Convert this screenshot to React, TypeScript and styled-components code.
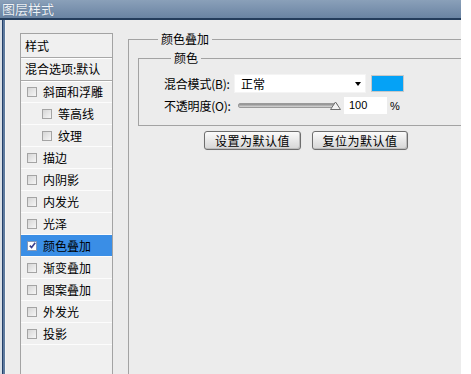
import React from 'react';
import styled, { createGlobalStyle } from 'styled-components';

const GlobalStyle = createGlobalStyle`
	html, body {
		margin: 0;
		padding: 0;
		background: #fff;
	}
	body {
		font-family: "Noto Sans CJK SC", "Liberation Sans", sans-serif;
		font-size: 12px;
		color: #000;
	}
`;

const Window = styled.div`
	width: 461px;
	height: 374px;
	display: flex;
	flex-direction: column;
	overflow: hidden;
`;

const TitleBar = styled.div`
	height: 18px;
	flex: none;
	display: flex;
	align-items: center;
	background: linear-gradient(#8aa0b9, #6a84a3);
	border-bottom: 2px solid #243d5c;
	color: #eef2f7;
	font-size: 13px;
	line-height: 18px;
	padding-left: 2px;
	text-shadow: 0 0 1px #46607f;
`;

const Body = styled.div`
	flex: 1;
	display: flex;
	min-height: 0;
`;

const FrameEdge = styled.div`
	width: 6px;
	flex: none;
	background: linear-gradient(90deg, #d9dfe6 0 2px, #24406a 2px 3px, #5f7b9e 3px 5px, #f4f4f4 5px);
`;

const Content = styled.div`
	flex: 1;
	display: flex;
	align-items: stretch;
	gap: 15px;
	padding: 13px 0 0 14px;
	background: #ececec;
	overflow: hidden;
`;

const StyleList = styled.div`
	width: 91px;
	flex: none;
	border: 1px solid #a3a3a3;
	border-bottom: none;
	background: #f0f0f0;
	display: flex;
	flex-direction: column;
`;

const ListHeader = styled.div<{ $h: number }>`
	height: ${(p) => p.$h}px;
	line-height: ${(p) => p.$h}px;
	padding-left: 4px;
	border-bottom: 1px solid #a8a8a8;
	box-shadow: 0 1px 0 #fff;
	white-space: nowrap;
	overflow: hidden;
`;

const ListRow = styled.div<{ $sub?: boolean; $active?: boolean }>`
	height: 21px;
	display: flex;
	align-items: center;
	gap: 6px;
	padding-left: ${(p) => (p.$sub ? 21 : 6)}px;
	border-bottom: 1px solid #fcfcfc;
	background: ${(p) => (p.$active ? '#3a8ee6' : 'transparent')};
	white-space: nowrap;
`;

const Check = styled.span<{ $on?: boolean }>`
	width: 8px;
	height: 8px;
	flex: none;
	border: 1px solid ${(p) => (p.$on ? '#8598b8' : '#a4a4a4')};
	background: ${(p) => (p.$on ? '#fff' : 'linear-gradient(135deg, #d6d6d6, #f6f6f6)')};
	display: flex;
	align-items: center;
	justify-content: center;
`;

const Group = styled.fieldset`
	flex: 1;
	margin: 0;
	padding: 7px 0 0 9px;
	border: 1px solid #a3a3a3;
	border-right: none;
	border-bottom: none;
	min-width: 0;
`;

const InnerGroup = styled.fieldset`
	margin: 0 -2px 0 0;
	padding: 10px 0 11px 25px;
	border: 1px solid #a3a3a3;
	border-right: none;
	display: flex;
	flex-direction: column;
	gap: 4px;
`;

const Legend = styled.legend<{ $left: number }>`
	margin-left: ${(p) => p.$left}px;
	padding: 0 3px;
	line-height: 12px;
	font-size: 12px;
`;

const FieldRow = styled.div`
	display: flex;
	align-items: center;
`;

const Label = styled.span`
	width: 70px;
	flex: none;
	white-space: nowrap;
	font-size: 12px;
	letter-spacing: -0.2px;
`;

const Select = styled.div`
	width: 132px;
	height: 19px;
	box-sizing: border-box;
	background: #fff;
	border: 1px solid #f4f4f4;
	display: flex;
	align-items: center;
	padding: 0 4px 0 6px;
`;

const Caret = styled.span`
	margin-left: auto;
	width: 0;
	height: 0;
	border-left: 3px solid transparent;
	border-right: 3px solid transparent;
	border-top: 4px solid #000;
`;

const Swatch = styled.div<{ $color: string }>`
	width: 33px;
	height: 17px;
	margin-left: 5px;
	background: ${(p) => p.$color};
	border: 1px solid #c8c8c8;
	box-sizing: border-box;
`;

const Slider = styled.div`
	position: relative;
	width: 100px;
	height: 17px;
	margin-left: 4px;
	display: flex;
	align-items: center;
`;

const Track = styled.div`
	width: 100%;
	height: 3px;
	border-radius: 2px;
	background: linear-gradient(#8c8c8c, #d8d8d8);
	border: 1px solid #9a9a9a;
`;

const Thumb = styled.svg`
	position: absolute;
	right: -3px;
	top: 4px;
`;

const NumInput = styled.div`
	width: 43px;
	height: 17px;
	margin-left: 6px;
	background: #fff;
	padding-left: 5px;
	box-sizing: border-box;
	line-height: 17px;
	font-family: "Liberation Sans", sans-serif;
	font-size: 11px;
`;

const Unit = styled.span`
	margin-left: 3px;
	font-family: "Liberation Sans", sans-serif;
	font-size: 11px;
`;

const Buttons = styled.div`
	display: flex;
	gap: 11px;
	margin-top: 5px;
	padding-left: 66px;
`;

const Button = styled.button<{ $w: number }>`
	width: ${(p) => p.$w}px;
	height: 19px;
	padding: 0;
	border: 1px solid #6e6e6e;
	border-radius: 3px;
	background: linear-gradient(#fbfbfb, #e4e4e4 60%, #d6d6d6);
	box-shadow: inset -1px -1px 0 #bdbdbd, 0 0 0 1px #e9e9e9;
	font-family: "Noto Sans CJK SC", sans-serif;
	font-size: 12px;
	line-height: 16px;
	color: #000;
	letter-spacing: 0.5px;
`;

type Item = { label: string; sub?: boolean; on?: boolean };

const items: Item[] = [
	{ label: '斜面和浮雕' },
	{ label: '等高线', sub: true },
	{ label: '纹理', sub: true },
	{ label: '描边' },
	{ label: '内阴影' },
	{ label: '内发光' },
	{ label: '光泽' },
	{ label: '颜色叠加', on: true },
	{ label: '渐变叠加' },
	{ label: '图案叠加' },
	{ label: '外发光' },
	{ label: '投影' },
];

const App = () => {
	return (
		<Window>
			<GlobalStyle />
			<TitleBar>图层样式</TitleBar>
			<Body>
				<FrameEdge />
				<Content>
					<StyleList>
						<ListHeader $h={23}>样式</ListHeader>
						<ListHeader $h={22}>混合选项:默认</ListHeader>
						{items.map((it) => (
							<ListRow key={it.label} $sub={it.sub} $active={it.on}>
								<Check $on={it.on}>
									{it.on && (
										<svg width="7" height="7" viewBox="0 0 7 7">
											<path d="M0.8 3.6 L2.6 5.6 L6.2 0.8" fill="none" stroke="#3b3f8e" strokeWidth="1.6" />
										</svg>
									)}
								</Check>
								{it.label}
							</ListRow>
						))}
					</StyleList>
					<Group>
						<Legend $left={20}>颜色叠加</Legend>
						<InnerGroup>
							<Legend $left={7}>颜色</Legend>
							<FieldRow>
								<Label>混合模式(B):</Label>
								<Select>
									正常
									<Caret />
								</Select>
								<Swatch $color="#05a2f6" />
							</FieldRow>
							<FieldRow>
								<Label>不透明度(O):</Label>
								<Slider>
									<Track />
									<Thumb width="11" height="9" viewBox="0 0 11 9">
										<path d="M0.5 8.5 L5.5 1 L10.5 8.5 Z" fill="#f2f2f2" stroke="#6c6c6c" />
									</Thumb>
								</Slider>
								<NumInput>100</NumInput>
								<Unit>%</Unit>
							</FieldRow>
						</InnerGroup>
						<Buttons>
							<Button $w={97}>设置为默认值</Button>
							<Button $w={96}>复位为默认值</Button>
						</Buttons>
					</Group>
				</Content>
			</Body>
		</Window>
	);
};

export default App;
